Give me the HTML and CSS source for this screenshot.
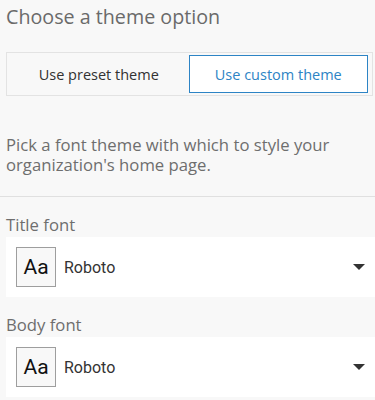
FILE: index.html
```html
<!DOCTYPE html>
<html lang="en">
<head>
    <meta charset="UTF-8">
    <meta name="viewport" content="width=device-width, initial-scale=1.0">
    <title>Theme options</title>
    <link rel="stylesheet" href="styles.css">
</head>
<body>
    <div class="panel">
        <h2 class="panel-title">Choose a theme option</h2>

        <div class="segmented">
            <button class="segment">Use preset theme</button>
            <button class="segment active">Use custom theme</button>
        </div>

        <p class="hint">Pick a font theme with which to style your organization's home page.</p>

        <hr class="divider">

        <div class="field">
            <div class="field-label">Title font</div>
            <div class="font-select">
                <div class="font-sample">Aa</div>
                <div class="font-name">Roboto</div>
                <div class="caret"></div>
            </div>
        </div>

        <div class="field">
            <div class="field-label">Body font</div>
            <div class="font-select">
                <div class="font-sample">Aa</div>
                <div class="font-name">Roboto</div>
                <div class="caret"></div>
            </div>
        </div>
    </div>
</body>
</html>
```

FILE: styles.css
```css
body {
    margin: 0;
    background-color: #f8f8f8;
    font-family: "Open Sans", Lato, sans-serif;
    color: #6e6e6e;
}

.panel {
    padding-top: 5px;
}

.panel-title {
    margin: 0 0 0 6px;
    font-size: 19.7px;
    font-weight: normal;
    line-height: 24px;
    color: #6a6a6a;
}

.segmented {
    display: flex;
    margin: 23px 2px 0 6px;
    padding: 2px 4px 2px 2px;
    border: 1px solid #e3e3e3;
    height: 38px;
}

.segment {
    flex: 1;
    margin: 0;
    border: 1px solid transparent;
    background: none;
    font-family: inherit;
    font-size: 14.5px;
    color: #323232;
    cursor: pointer;
}

.segment.active {
    background-color: #fff;
    border-color: #2d84c5;
    color: #2d84c5;
}

.hint {
    margin: 39px 0 0 6px;
    padding-right: 20px;
    font-size: 16.7px;
    line-height: 20px;
}

.divider {
    margin: 21px 0 0;
    border: none;
    border-top: 1px solid #e0e0e0;
}

.field {
    padding-left: 6px;
}

.field-label {
    margin-top: 16px;
    font-size: 16.7px;
    line-height: 24px;
}

.font-select {
    display: flex;
    align-items: center;
    height: 60px;
    padding-left: 10px;
    background-color: #fff;
}

.font-sample {
    box-sizing: border-box;
    width: 40px;
    height: 40px;
    border: 1px solid #9e9e9e;
    background-color: #f8f8f8;
    font-family: Roboto, sans-serif;
    font-size: 21px;
    line-height: 38px;
    text-align: center;
    color: #111;
}

.font-name {
    flex: 1;
    margin-left: 8px;
    font-family: Roboto, sans-serif;
    font-size: 16px;
    color: #333;
}

.caret {
    width: 0;
    height: 0;
    margin-right: 10px;
    border-left: 6px solid transparent;
    border-right: 6px solid transparent;
    border-top: 6px solid #333;
}
```
